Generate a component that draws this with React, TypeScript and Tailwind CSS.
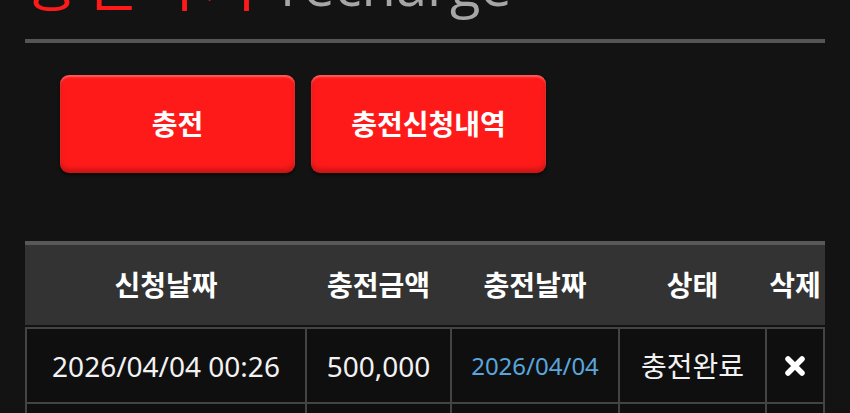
import React from 'react';

const font = { fontFamily: '"Noto Sans", "Noto Sans CJK KR", sans-serif' };

type Row = {
  requested: string;
  amount: string;
  charged: string;
  status: string;
};

const rows: Row[] = [
  { requested: '2026/04/04 00:26', amount: '500,000', charged: '2026/04/04', status: '충전완료' },
  { requested: '2026/04/03 21:12', amount: '300,000', charged: '2026/04/03', status: '충전완료' },
];

const cols = 'grid grid-cols-[278px_143px_166px_145px_56px] gap-[2px]';

function DeleteIcon() {
  return (
    <svg width="22" height="20" viewBox="0 0 22 20" fill="none">
      <path d="M4 3 L18 17 M18 3 L4 17" stroke="white" strokeWidth="5.5" strokeLinecap="round" />
    </svg>
  );
}

export default function App() {
  return (
    <div className="min-h-screen bg-[#131313] px-[25px] overflow-hidden" style={font}>
      {/* 타이틀 */}
      <div className="flex h-[39px]">
        <div className="flex items-baseline gap-[18px] -mt-[48px] leading-none whitespace-nowrap">
          <span className="text-[58px] text-[#ff1a1a] tracking-[6px]" style={{ fontFamily: '"Noto Sans CJK KR", sans-serif' }}>
            충전하기
          </span>
          <span className="text-[56px] text-[#a6a6a6]" style={{ fontFamily: '"Open Sans", sans-serif' }}>
            recharge
          </span>
        </div>
      </div>
      <div className="h-[4px] bg-[#555]" />

      {/* 버튼 */}
      <div className="flex gap-4 mt-8 pl-[35px]">
        {['충전', '충전신청내역'].map((label) => (
          <button
            key={label}
            className="w-[235px] h-[98px] rounded-[9px] bg-[#ff1a1a] text-white text-[28px] font-bold shadow-[inset_0_-4px_5px_rgba(0,0,0,0.22),inset_0_2px_2px_rgba(255,255,255,0.3),0_2px_3px_rgba(0,0,0,0.6)]"
          >
            {label}
          </button>
        ))}
      </div>

      {/* 충전 내역 테이블 */}
      <div className="mt-[68px] w-[800px]">
        <div className="border-t-4 border-[#585858] bg-[#333] h-[84px] px-[2px]">
          <div className={`${cols} h-full items-center text-white text-[28px] font-bold text-center`}>
            <div>신청날짜</div>
            <div>충전금액</div>
            <div>충전날짜</div>
            <div>상태</div>
            <div>삭제</div>
          </div>
        </div>
        <div className="mt-[2px] bg-[#444] p-[2px] flex flex-col gap-[2px]">
          {rows.map((r) => (
            <div key={r.requested} className={`${cols} h-[73px] text-[28px] text-[#f2f2f2]`}>
              <div className="bg-[#0f0f10] flex items-center justify-center">{r.requested}</div>
              <div className="bg-[#0f0f10] flex items-center justify-center">{r.amount}</div>
              <div className="bg-[#0f0f10] flex items-center justify-center text-[24px] text-[#5aa6dc]">{r.charged}</div>
              <div className="bg-[#0f0f10] flex items-center justify-center">{r.status}</div>
              <div className="bg-[#0f0f10] flex items-center justify-center">
                <DeleteIcon />
              </div>
            </div>
          ))}
        </div>
      </div>
    </div>
  );
}
